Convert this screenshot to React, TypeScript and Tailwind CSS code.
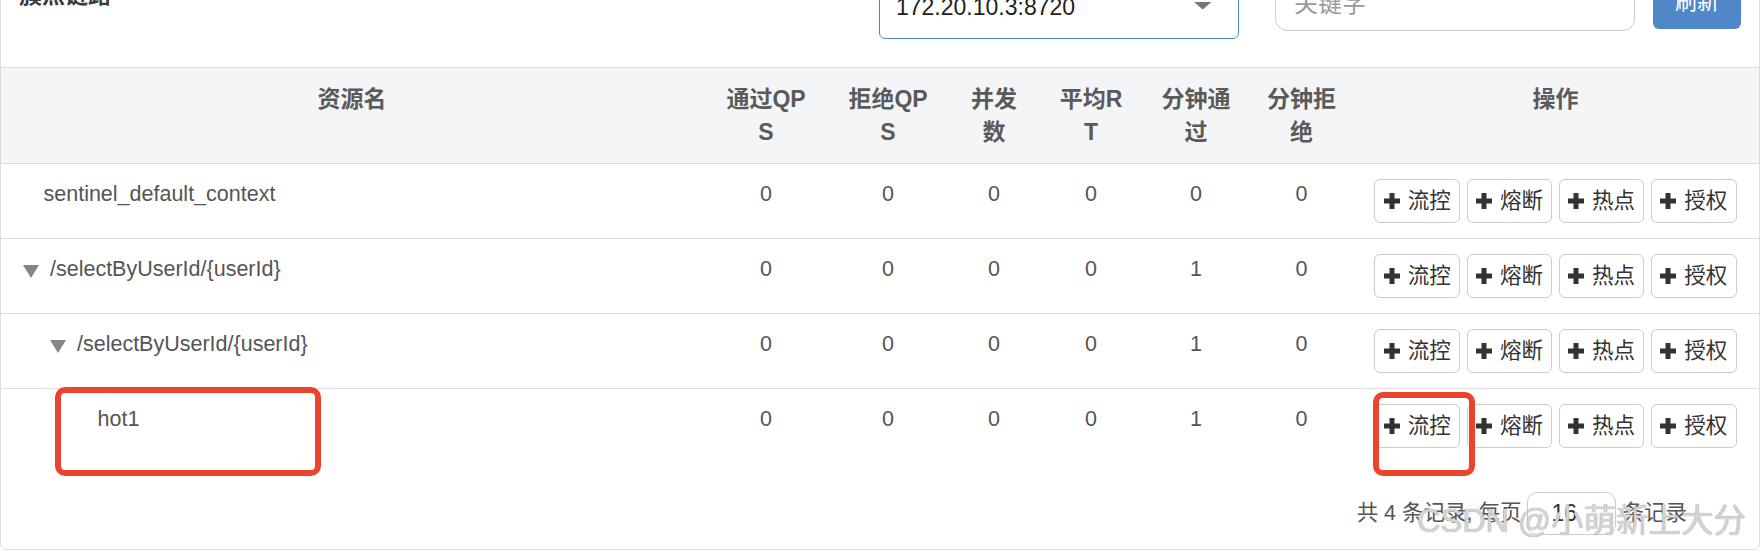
import React from "react";

const COLS =
  "grid grid-cols-[702px_126px_118px_94px_100px_110px_101px_407px]";

type Row = {
  name: string;
  level: number;
  toggle: boolean;
  vals: number[];
};

const rows: Row[] = [
  { name: "sentinel_default_context", level: 0, toggle: false, vals: [0, 0, 0, 0, 0, 0] },
  { name: "/selectByUserId/{userId}", level: 0, toggle: true, vals: [0, 0, 0, 0, 1, 0] },
  { name: "/selectByUserId/{userId}", level: 1, toggle: true, vals: [0, 0, 0, 0, 1, 0] },
  { name: "hot1", level: 2, toggle: false, vals: [0, 0, 0, 0, 1, 0] },
];

function Plus() {
  return (
    <svg width="16" height="16" viewBox="0 0 16 16" className="shrink-0">
      <rect x="0" y="5.5" width="16" height="5" fill="#333" />
      <rect x="5.5" y="0" width="5" height="16" fill="#333" />
    </svg>
  );
}

function Toggle() {
  return (
    <svg width="16" height="13" viewBox="0 0 16 13" className="mt-[11px] mr-[11.3px] shrink-0">
      <polygon points="0,0 16,0 8,13" fill="#858585" />
    </svg>
  );
}

const ACTIONS = ["流控", "熔断", "热点", "授权"];

export default function App() {
  return (
    <div className="relative h-[552px] w-[1760px] overflow-hidden bg-white font-['Liberation_Sans','Noto_Sans_CJK_SC',sans-serif]">
      <div className="mt-[-40px] w-[1760px] rounded-b-[6px] border border-[#dddddd]">
        {/* toolbar */}
        <div className="flex h-[106px] items-start">
          <div className="w-[878px] pl-[18px] pt-[18px] text-[23px] font-bold leading-[32px] text-[#3c3c3c]">
            簇点链路
          </div>
          <div className="mt-[22px] flex h-[56px] w-[360px] items-start justify-between rounded-[6px] border border-[#4a86c8] pl-[16px] pt-[10px]">
            <span className="text-[23px] leading-[26px] text-[#222]">172.20.10.3:8720</span>
            <svg className="mt-[7.7px] mr-[26.3px]" width="17.4" height="7.6" viewBox="0 0 17.4 7.6">
              <polygon points="0,0 17.4,0 8.7,7.6" fill="#777" />
            </svg>
          </div>
          <div className="ml-[36px] mt-[20px] h-[50px] w-[360px] rounded-[12px] border border-[#cccccc] pl-[18px] pt-[9px] text-[24px] leading-[26px] text-[#9a9a9a]">
            关键字
          </div>
          <div className="ml-[18px] mt-[18px] h-[50px] w-[88px] rounded-[6px] bg-[#4f87c7] pt-[9.5px] text-center text-[22px] leading-[26px] text-white">
            刷新
          </div>
        </div>

        {/* header */}
        <div
          className={`${COLS} h-[97px] border-y border-[#dddddd] bg-[#f4f5f7] text-[23px] font-bold leading-[33px] text-[#5a5a5a]`}
        >
          <div className="pt-[15px] text-center">资源名</div>
          <div className="pt-[15px] text-center">
            通过QP
            <br />S
          </div>
          <div className="pt-[15px] text-center">
            拒绝QP
            <br />S
          </div>
          <div className="pt-[15px] text-center">
            并发
            <br />数
          </div>
          <div className="pt-[15px] text-center">
            平均R
            <br />T
          </div>
          <div className="pt-[15px] text-center">
            分钟通
            <br />过
          </div>
          <div className="pt-[15px] text-center">
            分钟拒
            <br />绝
          </div>
          <div className="pt-[15px] text-center">操作</div>
        </div>

        {/* rows */}
        {rows.map((r, i) => (
          <div
            key={i}
            className={`${COLS} ${
              i < rows.length - 1 ? "h-[75px] border-b border-[#dddddd]" : "h-[74px]"
            } text-[21.5px] leading-[30px] text-[#555]`}
          >
            <div
              className="flex items-start pt-[15px]"
              style={{
                paddingLeft: r.toggle ? 21.7 + 27 * r.level : 21.7 + 27 * r.level + 20.8,
              }}
            >
              {r.toggle && <Toggle />}
              <span>{r.name}</span>
            </div>
            {r.vals.map((v, j) => (
              <div key={j} className="pt-[15px] text-center">
                {v}
              </div>
            ))}
            <div className="flex items-start justify-center gap-[6.7px] pt-[15px]">
              {ACTIONS.map((a) => (
                <div
                  key={a}
                  className="flex h-[44px] w-[85.5px] items-center justify-center gap-[8px] rounded-[6px] border border-[#cccccc] bg-white text-[#333]"
                >
                  <Plus />
                  <span className="leading-[26px]">{a}</span>
                </div>
              ))}
            </div>
          </div>
        ))}

        {/* pagination */}
        <div className="mt-[29px] mb-[14px] flex h-[43px] items-center justify-end pr-[72px] text-[21.5px] text-[#555]">
          <span>共 4 条记录, 每页</span>
          <div className="mx-[6px] flex h-[43px] w-[89px] items-center rounded-[10px] border border-[#cccccc] pl-[23px] text-[23px] text-[#333]">
            16
          </div>
          <span>条记录</span>
        </div>
      </div>

      {/* annotation boxes */}
      <div className="absolute left-[55px] top-[387px] h-[89px] w-[266px] rounded-[10px] border-[6px] border-[#e8452c]" />
      <div className="absolute left-[1373px] top-[392px] h-[84px] w-[102px] rounded-[10px] border-[6px] border-[#e8452c]" />

      {/* watermark */}
      <div className="absolute left-[1417px] top-[505px] whitespace-nowrap text-[32.5px] leading-[32.5px] text-[#d4d4d4] [text-shadow:0_0_1px_#8a8a8a]">
        CSDN @小萌新上大分
      </div>
    </div>
  );
}
